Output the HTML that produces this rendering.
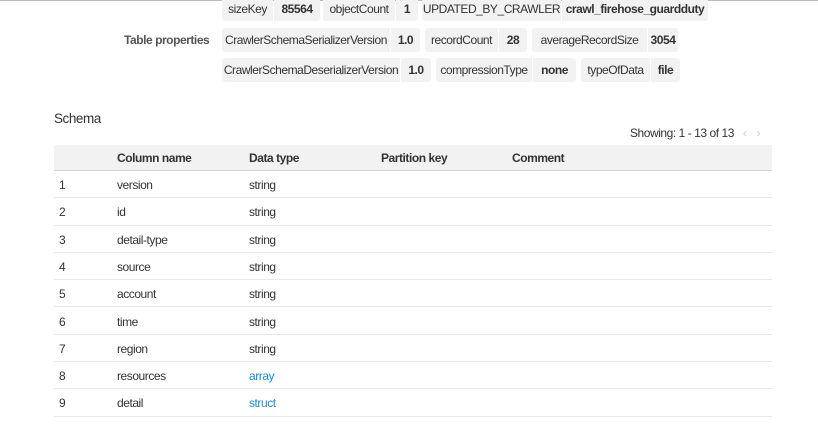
<!DOCTYPE html>
<html><head><meta charset="utf-8"><style>
*{margin:0;padding:0;box-sizing:border-box}
body{width:818px;height:424px;overflow:hidden;background:#fff;font-family:"Liberation Sans",Arial,sans-serif;font-size:12px;letter-spacing:-0.45px;color:#333;position:relative}
.topline{position:absolute;left:0;top:0;width:818px;height:1px;background:#bbb}
.k,.v{position:absolute;height:24px;line-height:24px;background:#f2f2f2;text-align:center;white-space:nowrap}
.k{border-radius:3px 0 0 3px}
.v{font-weight:bold;border-radius:0 3px 3px 0}
.lbl{position:absolute;left:124px;top:33px;font-weight:bold;color:#555}
.t{position:absolute;white-space:nowrap}
.hdr{position:absolute;left:54px;top:145px;width:718px;height:26px;background:#f2f2f2;border-bottom:1px solid #d5d5d5}
.hdr div{position:absolute;top:6px;font-weight:bold}
.row{position:absolute;left:54px;width:718px;height:27.3px;border-bottom:1px solid #e8e8e8}
.row div{position:absolute;top:7px}
a{color:#1a8ad4;text-decoration:none}
</style></head><body>
<div class="topline"></div>
<div class="k" style="left:222px;top:-3px;width:51px">sizeKey</div><div class="v" style="left:274px;top:-3px;width:46px">85564</div>
<div class="k" style="left:323px;top:-3px;width:72px">objectCount</div><div class="v" style="left:396px;top:-3px;width:22px">1</div>
<div class="k" style="left:422px;top:-3px;width:139px">UPDATED_BY_CRAWLER</div><div class="v" style="left:562px;top:-3px;width:146px">crawl_firehose_guardduty</div>
<div class="lbl">Table properties</div>
<div class="k" style="left:222px;top:28px;width:168px">CrawlerSchemaSerializerVersion</div><div class="v" style="left:391px;top:28px;width:29px">1.0</div>
<div class="k" style="left:425px;top:28px;width:73px">recordCount</div><div class="v" style="left:499px;top:28px;width:28px">28</div>
<div class="k" style="left:532px;top:28px;width:115px">averageRecordSize</div><div class="v" style="left:648px;top:28px;width:30px">3054</div>
<div class="k" style="left:222px;top:58px;width:178px">CrawlerSchemaDeserializerVersion</div><div class="v" style="left:401px;top:58px;width:30px">1.0</div>
<div class="k" style="left:436px;top:58px;width:96px">compressionType</div><div class="v" style="left:533px;top:58px;width:43px">none</div>
<div class="k" style="left:581px;top:58px;width:69px">typeOfData</div><div class="v" style="left:651px;top:58px;width:29px">file</div>
<div class="t" style="left:54px;top:111px;font-size:13.5px">Schema</div>
<div class="t" style="left:630px;top:126px">Showing: 1 - 13 of 13 <span style="color:#ccc;margin-left:6px">&#8249;</span><span style="color:#ccc;margin-left:10px">&#8250;</span></div>
<div class="hdr"><div style="left:63px">Column name</div><div style="left:195px">Data type</div><div style="left:327px">Partition key</div><div style="left:458px">Comment</div></div>
<div class="row" style="top:171px"><div style="left:5px">1</div><div style="left:63px">version</div><div style="left:195px">string</div></div>
<div class="row" style="top:198.3px"><div style="left:5px">2</div><div style="left:63px">id</div><div style="left:195px">string</div></div>
<div class="row" style="top:225.6px"><div style="left:5px">3</div><div style="left:63px">detail-type</div><div style="left:195px">string</div></div>
<div class="row" style="top:252.9px"><div style="left:5px">4</div><div style="left:63px">source</div><div style="left:195px">string</div></div>
<div class="row" style="top:280.2px"><div style="left:5px">5</div><div style="left:63px">account</div><div style="left:195px">string</div></div>
<div class="row" style="top:307.5px"><div style="left:5px">6</div><div style="left:63px">time</div><div style="left:195px">string</div></div>
<div class="row" style="top:334.8px"><div style="left:5px">7</div><div style="left:63px">region</div><div style="left:195px">string</div></div>
<div class="row" style="top:362.1px"><div style="left:5px">8</div><div style="left:63px">resources</div><div style="left:195px"><a>array</a></div></div>
<div class="row" style="top:389.4px"><div style="left:5px">9</div><div style="left:63px">detail</div><div style="left:195px"><a>struct</a></div></div>
</body></html>
